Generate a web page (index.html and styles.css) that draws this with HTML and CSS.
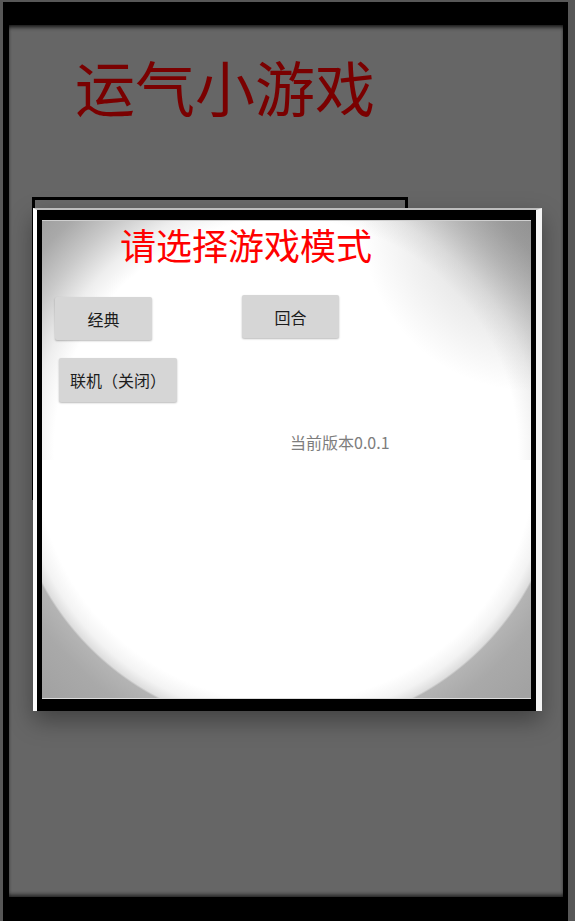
FILE: index.html
```html
<!DOCTYPE html>
<html lang="zh-CN">
<head>
<meta charset="utf-8">
<title>运气小游戏</title>
<link rel="stylesheet" href="styles.css">
</head>
<body>
<div class="device">
  <div class="screen">
    <h1 class="app-title">运气小游戏</h1>
    <div class="back-panel"></div>
    <div class="dialog">
      <div class="dialog-frame">
        <div class="dialog-body">
          <h2 class="dialog-title">请选择游戏模式</h2>
          <div class="mode-row">
            <button class="btn btn-classic">经典</button>
            <button class="btn btn-round">回合</button>
          </div>
          <button class="btn btn-online">联机（关闭）</button>
          <p class="version">当前版本0.0.1</p>
        </div>
      </div>
    </div>
  </div>
</div>
</body>
</html>
```

FILE: styles.css
```css
html, body {
  margin: 0;
  padding: 0;
}

body {
  background: #575757;
  font-family: "Noto Sans CJK SC", "Noto Sans", sans-serif;
  width: 575px;
  height: 921px;
  overflow: hidden;
}

.device {
  box-sizing: border-box;
  margin: 2px 7px 0 3px;
  height: 919px;
  background: #000;
  padding: 23px 5px 24px 6px;
}

.screen {
  position: relative;
  box-sizing: border-box;
  height: 100%;
  background: #666666;
  box-shadow: inset 0 4px 4px -2px rgba(0, 0, 0, 0.85),
              inset 0 -4px 4px -2px rgba(0, 0, 0, 0.7);
  overflow: hidden;
}

.app-title {
  margin: 0;
  padding: 31px 0 0 66px;
  font-size: 60px;
  line-height: 60px;
  font-weight: normal;
  color: #7a0000;
}

.back-panel {
  margin: 81px 0 0 23px;
  width: 376px;
  height: 303px;
  box-sizing: border-box;
  border: 3px solid #000;
  background: #696969;
}

.dialog {
  position: absolute;
  left: 24px;
  top: 183px;
  width: 509px;
  box-sizing: border-box;
  border-left: 4px solid #fdfdfd;
  border-right: 6px solid #f4f4f4;
  border-top: 2px solid #bdbdbd;
  box-shadow: 0 10px 22px rgba(0, 0, 0, 0.35);
}

.dialog-frame {
  background: #000;
  padding: 10px 5px 12px 5px;
}

.dialog-body {
  box-sizing: border-box;
  width: 489px;
  height: 479px;
  border-top: 1px solid #cfcfcf;
  border-bottom: 1px solid #dcdcdc;
  padding-top: 3px;
  background-color: #ffffff;
  background-image:
    radial-gradient(circle at 100% 0,
      rgba(130, 130, 130, 0.45) 0,
      rgba(130, 130, 130, 0.2) 90px,
      rgba(130, 130, 130, 0) 170px),
    radial-gradient(circle 278px at 244px -8px,
      #ffffff 0,
      #ffffff 250px,
      #f3f3f3 266px,
      #dedede 276px,
      #b4b4b4 278px,
      #a9a9a9 300px,
      #a2a2a2 340px),
    radial-gradient(circle at 244px 230px,
      #ffffff 0,
      #ffffff 232px,
      #eeeeee 255px,
      #c9c9c9 285px,
      #a9a9a9 315px,
      #9a9a9a 350px);
  background-size: 100% 100%, 100% 50%, 100% 100%;
  background-position: 0 0, 0 100%, 0 0;
  background-repeat: no-repeat;
}

.dialog-title {
  margin: 0 0 0 78px;
  font-size: 36px;
  line-height: 40px;
  font-weight: normal;
  color: #ff0000;
}

.mode-row {
  display: flex;
  align-items: flex-start;
  margin-top: 31px;
}

.btn {
  display: block;
  box-sizing: border-box;
  padding: 0;
  border: none;
  border-radius: 2px;
  background: #d6d6d6;
  box-shadow: 0 1px 2px rgba(0, 0, 0, 0.28);
  font-family: "Noto Sans CJK SC", "Noto Sans", sans-serif;
  font-size: 16px;
  color: #1c1c1c;
  text-align: center;
}

.btn-classic {
  margin: 2px 0 0 13px;
  width: 97px;
  height: 43px;
}

.btn-round {
  margin-left: 90px;
  width: 97px;
  height: 43px;
}

.btn-online {
  margin: 18px 0 0 17px;
  width: 118px;
  height: 44px;
}

.version {
  margin: 30px 0 0 248px;
  font-size: 16px;
  line-height: 20px;
  color: #7d7d7d;
}
```
